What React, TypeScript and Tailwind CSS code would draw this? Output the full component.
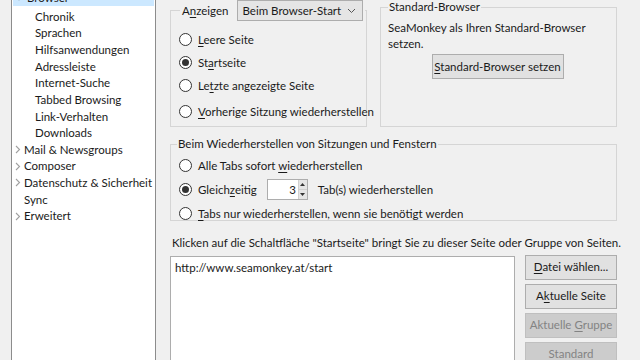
import React from "react";

const U = ({ c }: { c: string }) => <span className="underline underline-offset-2">{c}</span>;

const Radio = ({ checked }: { checked?: boolean }) => (
  <span className="w-[13px] h-[13px] rounded-full border border-[#333333] bg-white flex items-center justify-center shrink-0">
    {checked && <span className="w-[7px] h-[7px] rounded-full bg-[#333333]" />}
  </span>
);

const Chevron = () => (
  <svg width="6" height="9" viewBox="0 0 6 9" className="shrink-0">
    <path d="M1 1 L4.5 4.5 L1 8" stroke="#a0a0a0" strokeWidth="1.1" fill="none" />
  </svg>
);

const TreeSub = ({ t }: { t: string }) => (
  <div className="h-[16.67px] flex items-center pl-[23px]">{t}</div>
);
const TreeTop = ({ t, arrow }: { t: string; arrow?: boolean }) => (
  <div className="h-[16.67px] flex items-center pl-[3px] gap-[3px]">
    <span className="w-[6px] flex">{arrow && <Chevron />}</span>
    {t}
  </div>
);

const Btn = ({ children, disabled, cls }: { children: React.ReactNode; disabled?: boolean; cls?: string }) => (
  <div
    className={
      "h-[25px] flex items-center justify-center border " +
      (disabled ? "bg-[#cccccc] border-[#bfbfbf] text-[#838383] " : "bg-[#e1e1e1] border-[#adadad] text-[#1a1a1a] ") +
      (cls || "")
    }
  >
    {children}
  </div>
);

export default function App() {
  return (
    <div
      className="w-[640px] h-[360px] overflow-hidden bg-[#f0f0f0] text-[11.5px] text-[#1a1a1a] flex whitespace-nowrap"
      style={{ fontFamily: 'Lato, "Noto Sans", sans-serif' }}
    >
      {/* Tree */}
      <div className="ml-[11px] w-[145px] h-[400px] -mt-[10px] bg-white border border-[#8c8c8c] border-t-0 shrink-0 leading-none">
        <div className="h-[16px] mx-[1px] bg-[#cce8ff] flex items-center pl-[2px] gap-[4px]">
          <svg width="8" height="6" viewBox="0 0 8 6"><path d="M1 1 L4 4.5 L7 1" stroke="#333" strokeWidth="1.2" fill="none" /></svg>
          Browser
        </div>
        <div className="h-[2px]" />
        <TreeSub t="Chronik" />
        <TreeSub t="Sprachen" />
        <TreeSub t="Hilfsanwendungen" />
        <TreeSub t="Adressleiste" />
        <TreeSub t="Internet-Suche" />
        <TreeSub t="Tabbed Browsing" />
        <TreeSub t="Link-Verhalten" />
        <TreeSub t="Downloads" />
        <TreeTop t="Mail & Newsgroups" arrow />
        <TreeTop t="Composer" arrow />
        <TreeTop t="Datenschutz & Sicherheit" arrow />
        <TreeTop t="Sync" />
        <TreeTop t="Erweitert" arrow />
      </div>

      {/* Right panel */}
      <div className="ml-[14px] w-[447px] shrink-0 flex flex-col leading-none">
        <div className="flex gap-[13px]">
          <fieldset className="w-[197px] h-[127px] shrink-0 border border-[#d5d5d5] pl-[8px] pr-[4px] min-w-0">
            <legend className="flex items-center gap-[8px] px-[2px] ml-[1px]">
              <span>
                A<U c="n" />zeigen
              </span>
              <span className="w-[126px] h-[21px] bg-[#e5e5e5] border border-[#adadad] flex items-center justify-between pl-[5px] pr-[6px]">
                Beim Browser-Start
                <svg width="9" height="6" viewBox="0 0 9 6"><path d="M1 1 L4.5 4.5 L8 1" stroke="#555" strokeWidth="1" fill="none" /></svg>
              </span>
            </legend>
            <div className="flex flex-col mt-[12px] gap-[10px]">
              <div className="flex items-center gap-[6px] h-[13px]"><Radio /><span><U c="L" />eere Seite</span></div>
              <div className="flex items-center gap-[6px] h-[13px]"><Radio checked /><span>St<U c="a" />rtseite</span></div>
              <div className="flex items-center gap-[6px] h-[13px]"><Radio /><span>Le<U c="t" />zte angezeigte Seite</span></div>
              <div className="flex items-center gap-[6px] h-[13px] mt-[3px]"><Radio /><span><U c="V" />orherige Sitzung wiederherstellen</span></div>
            </div>
          </fieldset>
          <fieldset className="w-[237px] h-[127px] shrink-0 border border-[#d5d5d5] pl-[7px] pr-[4px] min-w-0">
            <legend className="px-[1px] h-[14px] flex items-center">Standard-Browser</legend>
            <div className="mt-[6px] leading-[16px]">SeaMonkey als Ihren Standard-Browser<br />setzen.</div>
            <div className="flex justify-center mt-[2px] pr-[5px]">
              <Btn cls="w-[132px] h-[24px]">
                <span><U c="S" />tandard-Browser setzen</span>
              </Btn>
            </div>
          </fieldset>
        </div>

        <fieldset className="mt-[10px] h-[92px] border border-[#d5d5d5] pl-[8px] min-w-0">
          <legend className="px-[1px] ml-[-2px] h-[14px] flex items-center">Beim Wiederherstellen von Sitzungen und Fenstern</legend>
          <div className="flex flex-col mt-[8px]">
            <div className="flex items-center gap-[6px] h-[13px]"><Radio /><span>Alle Tabs sofort <U c="w" />iederherstellen</span></div>
            <div className="flex items-center gap-[6px] h-[21px] mt-[7px]">
              <Radio checked />
              <span>Gleich<U c="z" />eitig</span>
              <div className="ml-[4px] w-[41px] h-[21px] border border-[#adadad] bg-white flex">
                <div className="flex-1 flex items-center justify-end pr-[2px]">3</div>
                <div className="w-[9px] flex flex-col border-l border-[#d0d0d0]">
                  <div className="flex-1 bg-[#e5e5e5] flex items-center justify-center border-b border-[#d0d0d0]">
                    <svg width="5" height="3" viewBox="0 0 5 3"><path d="M0 3 L2.5 0 L5 3Z" fill="#333" /></svg>
                  </div>
                  <div className="flex-1 bg-[#e5e5e5] flex items-center justify-center">
                    <svg width="5" height="3" viewBox="0 0 5 3"><path d="M0 0 L2.5 3 L5 0Z" fill="#333" /></svg>
                  </div>
                </div>
              </div>
              <span className="ml-[4px]">Tab(s) wiederherstellen</span>
            </div>
            <div className="flex items-center gap-[6px] h-[13px] mt-[7px]"><Radio /><span><U c="T" />abs nur wiederherstellen, wenn sie benötigt werden</span></div>
          </div>
        </fieldset>

        <div className="mt-[16px] pl-[2px] h-[14px] flex items-center">
          Klicken auf die Schaltfläche "Startseite" bringt Sie zu dieser Seite oder Gruppe von Seiten.
        </div>
        <div className="flex mt-[7px] gap-[10px]">
          <div className="w-[345px] h-[120px] bg-white border border-[#adadad] pl-[4px] pt-[5px]">
            http://www.seamonkey.at/start
          </div>
          <div className="w-[92px] flex flex-col gap-[4px] mt-[-1px]">
            <Btn><span><U c="D" />atei wählen...</span></Btn>
            <Btn><span>A<U c="k" />tuelle Seite</span></Btn>
            <Btn disabled><span>Aktuelle <U c="G" />ruppe</span></Btn>
            <Btn disabled><span>Standard</span></Btn>
          </div>
        </div>
      </div>
    </div>
  );
}
